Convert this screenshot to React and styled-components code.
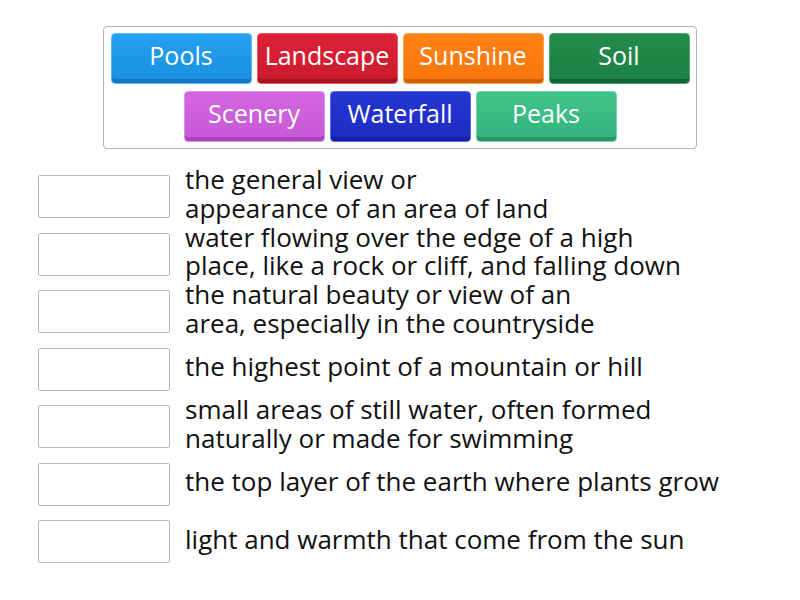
import React from "react";
import styled, { createGlobalStyle } from "styled-components";

const GlobalStyle = createGlobalStyle`
  body {
    margin: 0;
    background: #fff;
    font-family: "Open Sans", "Noto Sans", sans-serif;
  }
`;

const Page = styled.div`
  width: 800px;
  height: 600px;
  padding-top: 26px;
  box-sizing: border-box;
`;

const Bank = styled.div`
  width: 594px;
  margin: 0 auto;
  box-sizing: border-box;
  border: 1px solid #b4b4b4;
  border-radius: 4px;
  padding: 6px;
  display: flex;
  flex-wrap: wrap;
  justify-content: center;
  gap: 7px 5px;
`;

const Tile = styled.div`
  width: 141px;
  height: 51px;
  box-sizing: border-box;
  border-radius: 4px;
  border: 1px solid ${(p) => p.$light};
  background: linear-gradient(${(p) => p.$top}, ${(p) => p.$bottom});
  box-shadow: inset 0 -4px 0 ${(p) => p.$dark};
  color: #fff;
  font-size: 25px;
  display: flex;
  align-items: center;
  justify-content: center;
  padding-bottom: 7px;
`;

const List = styled.div`
  margin-top: 19px;
  padding-left: 38px;
  display: flex;
  flex-direction: column;
`;

const Row = styled.div`
  height: 57.5px;
  display: flex;
  align-items: center;
  gap: 15px;
`;

const Slot = styled.div`
  width: 132px;
  height: 43px;
  box-sizing: border-box;
  border: 1px solid #b8b8b8;
  border-radius: 2px;
  flex-shrink: 0;
`;

const Definition = styled.div`
  font-size: 26px;
  line-height: 28.5px;
  color: #111;
  width: 600px;
  padding-bottom: 6px;
  white-space: pre-line;
`;

const tiles = [
  ["Pools", "#23a1f0", "#1b8fe0", "#5cbaf5", "#1577c4"],
  ["Landscape", "#dc2237", "#cc1a2e", "#e85a68", "#a7131f"],
  ["Sunshine", "#ff8214", "#f8760c", "#ffa14d", "#d25e05"],
  ["Soil", "#228c4c", "#1c7f43", "#4da870", "#13633a"],
  ["Scenery", "#d466e0", "#c659d6", "#e38fea", "#a743b6"],
  ["Waterfall", "#2436d2", "#1e2cc0", "#5a67e0", "#1520a0"],
  ["Peaks", "#41c48b", "#35b47d", "#6fd6a8", "#2a9466"],
];

const definitions = [
  "the general view or\nappearance of an area of land",
  "water flowing over the edge of a high\nplace, like a rock or cliff, and falling down",
  "the natural beauty or view of an\narea, especially in the countryside",
  "the highest point of a mountain or hill",
  "small areas of still water, often formed\nnaturally or made for swimming",
  "the top layer of the earth where plants grow",
  "light and warmth that come from the sun",
];

const App = () => {
  return (
    <Page>
      <GlobalStyle />
      <Bank>
        {tiles.map(([label, top, bottom, light, dark]) => (
          <Tile key={label} $top={top} $bottom={bottom} $light={light} $dark={dark}>
            {label}
          </Tile>
        ))}
      </Bank>
      <List>
        {definitions.map((text, i) => (
          <Row key={i}>
            <Slot />
            <Definition>{text}</Definition>
          </Row>
        ))}
      </List>
    </Page>
  );
};

export default App;
